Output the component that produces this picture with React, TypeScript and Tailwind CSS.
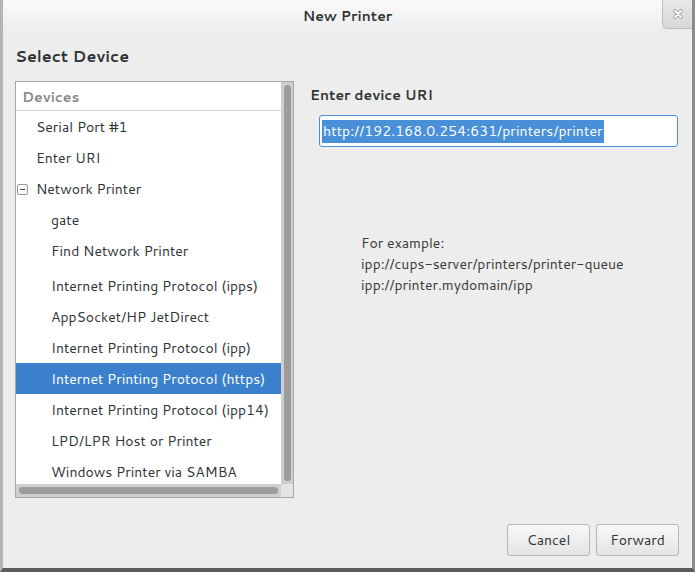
import React from 'react'

const font = { fontFamily: 'Cantarell, "Open Sans", "Noto Sans", sans-serif' }

type Row = { label: string; indent: number; expander?: boolean; selected?: boolean; gapAfter?: boolean }

const rows: Row[] = [
  { label: 'Serial Port #1', indent: 1 },
  { label: 'Enter URI', indent: 1 },
  { label: 'Network Printer', indent: 1, expander: true },
  { label: 'gate', indent: 2 },
  { label: 'Find Network Printer', indent: 2, gapAfter: true },
  { label: 'Internet Printing Protocol (ipps)', indent: 2 },
  { label: 'AppSocket/HP JetDirect', indent: 2 },
  { label: 'Internet Printing Protocol (ipp)', indent: 2 },
  { label: 'Internet Printing Protocol (https)', indent: 2, selected: true },
  { label: 'Internet Printing Protocol (ipp14)', indent: 2 },
  { label: 'LPD/LPR Host or Printer', indent: 2 },
  { label: 'Windows Printer via SAMBA', indent: 2 },
]

function Expander() {
  return (
    <svg width="11" height="11" viewBox="0 0 11 11" className="shrink-0">
      <rect x="0.5" y="0.5" width="10" height="10" rx="1.5" fill="#fff" stroke="#9a9a9a" />
      <path d="M3 5.5h5" stroke="#555" strokeWidth="1" />
    </svg>
  )
}

export default function App() {
  return (
    <div
      className="w-[695px] h-[572px] bg-[#ededed] flex flex-col border-l-[3px] border-l-[#b4b4b4] border-r-[3px] border-r-[#8c8c8c] border-b-[4px] border-b-[#5c5c5c] text-[#2e3436] overflow-hidden"
      style={font}
    >
      {/* Title bar */}
      <div className="h-[31px] shrink-0 flex items-start bg-gradient-to-b from-[#fafafa] to-[#ededed] relative">
        <div className="flex-1 h-[31px] pt-[2px] flex items-center justify-center text-[14px] font-semibold text-[#2e3436]">
          New Printer
        </div>
        <div className="absolute right-[-1px] top-0 w-[31px] h-[29px] rounded-bl-[5px] border-l border-b border-[#bcbcbc] bg-gradient-to-b from-[#e8e8e8] to-[#d8d8d8] flex items-center justify-center">
          <svg width="12" height="12" viewBox="0 0 12 12">
            <path d="M3 3l6 6M9 3l-6 6" stroke="#9a9a9a" strokeWidth="3.6" strokeLinecap="round" />
            <path d="M3 3l6 6M9 3l-6 6" stroke="#fbfbfb" strokeWidth="2" strokeLinecap="round" />
          </svg>
        </div>
      </div>

      {/* Body */}
      <div className="flex-1 flex flex-col px-[12px]">
        <div className="text-[16px] font-semibold mt-[13px] leading-[24px]">Select Device</div>

        <div className="flex mt-[13px] gap-[16px]">
          {/* Device list */}
          <div className="w-[279px] h-[417px] border border-[#a7a7a7] bg-white flex flex-col shrink-0">
            <div className="flex flex-1 min-h-0">
              <div className="flex-1 flex flex-col min-w-0">
                <div className="h-[29px] pt-[2px] border-b border-[#d5d5d5] flex items-center px-[6px] text-[14px] font-semibold text-[#8a8a8a] shrink-0">
                  Devices
                </div>
                {rows.map((r) => (
                  <div
                    key={r.label}
                    className={
                      'h-[31px] pt-[2px] flex items-center text-[14px] whitespace-nowrap shrink-0 ' +
                      (r.gapAfter ? 'mb-[4px] ' : '') +
                      (r.selected ? 'bg-[#3b80cc] text-white' : 'text-[#2e3436]')
                    }
                  >
                    {r.indent === 1 ? (
                      <div className="w-[20px] pl-[1px] flex items-center">{r.expander ? <Expander /> : null}</div>
                    ) : (
                      <div className="w-[35px]" />
                    )}
                    <span>{r.label}</span>
                  </div>
                ))}
              </div>
              {/* vertical scrollbar */}
              <div className="w-[12px] bg-[#cecece] flex justify-center py-[3px] shrink-0">
                <div className="w-[7px] bg-[#9c9c9c] rounded-full h-full" />
              </div>
            </div>
            <div className="h-[13px] flex shrink-0">
              <div className="flex-1 bg-[#cecece] flex items-center px-[3px]">
                <div className="h-[7px] w-full bg-[#9c9c9c] rounded-full" />
              </div>
              <div className="w-[12px] bg-[#e4e4e4]" />
            </div>
          </div>

          {/* URI panel */}
          <div className="flex-1 flex flex-col pt-[5px]">
            <div className="text-[14px] font-semibold leading-[18px]">Enter device URI</div>
            <div className="ml-[9px] mt-[11px] w-[359px] h-[32px] border border-[#4a90d9] rounded-[3px] bg-white flex items-center px-[2px]">
              <span className="bg-[#4a90d9] text-white text-[14px] leading-[23px] px-[1px] tracking-[0.1px]">
                http://192.168.0.254:631/printers/printer
              </span>
            </div>
            <div className="ml-[51px] mt-[86px] text-[14px] leading-[21px] text-[#3a3a3a]">
              <div>For example:</div>
              <div>ipp://cups-server/printers/printer-queue</div>
              <div>ipp://printer.mydomain/ipp</div>
            </div>
          </div>
        </div>

        {/* Buttons */}
        <div className="flex justify-end gap-[6px] mt-[26px] pr-[1px]">
          <button className="w-[83px] h-[32px] rounded-[3px] border border-[#b6b6b6] bg-gradient-to-b from-[#f8f8f8] to-[#e4e4e4] text-[14px] text-[#2e3436]">
            Cancel
          </button>
          <button className="w-[83px] h-[32px] rounded-[3px] border border-[#b6b6b6] bg-gradient-to-b from-[#f8f8f8] to-[#e4e4e4] text-[14px] text-[#2e3436]">
            Forward
          </button>
        </div>
      </div>
    </div>
  )
}
